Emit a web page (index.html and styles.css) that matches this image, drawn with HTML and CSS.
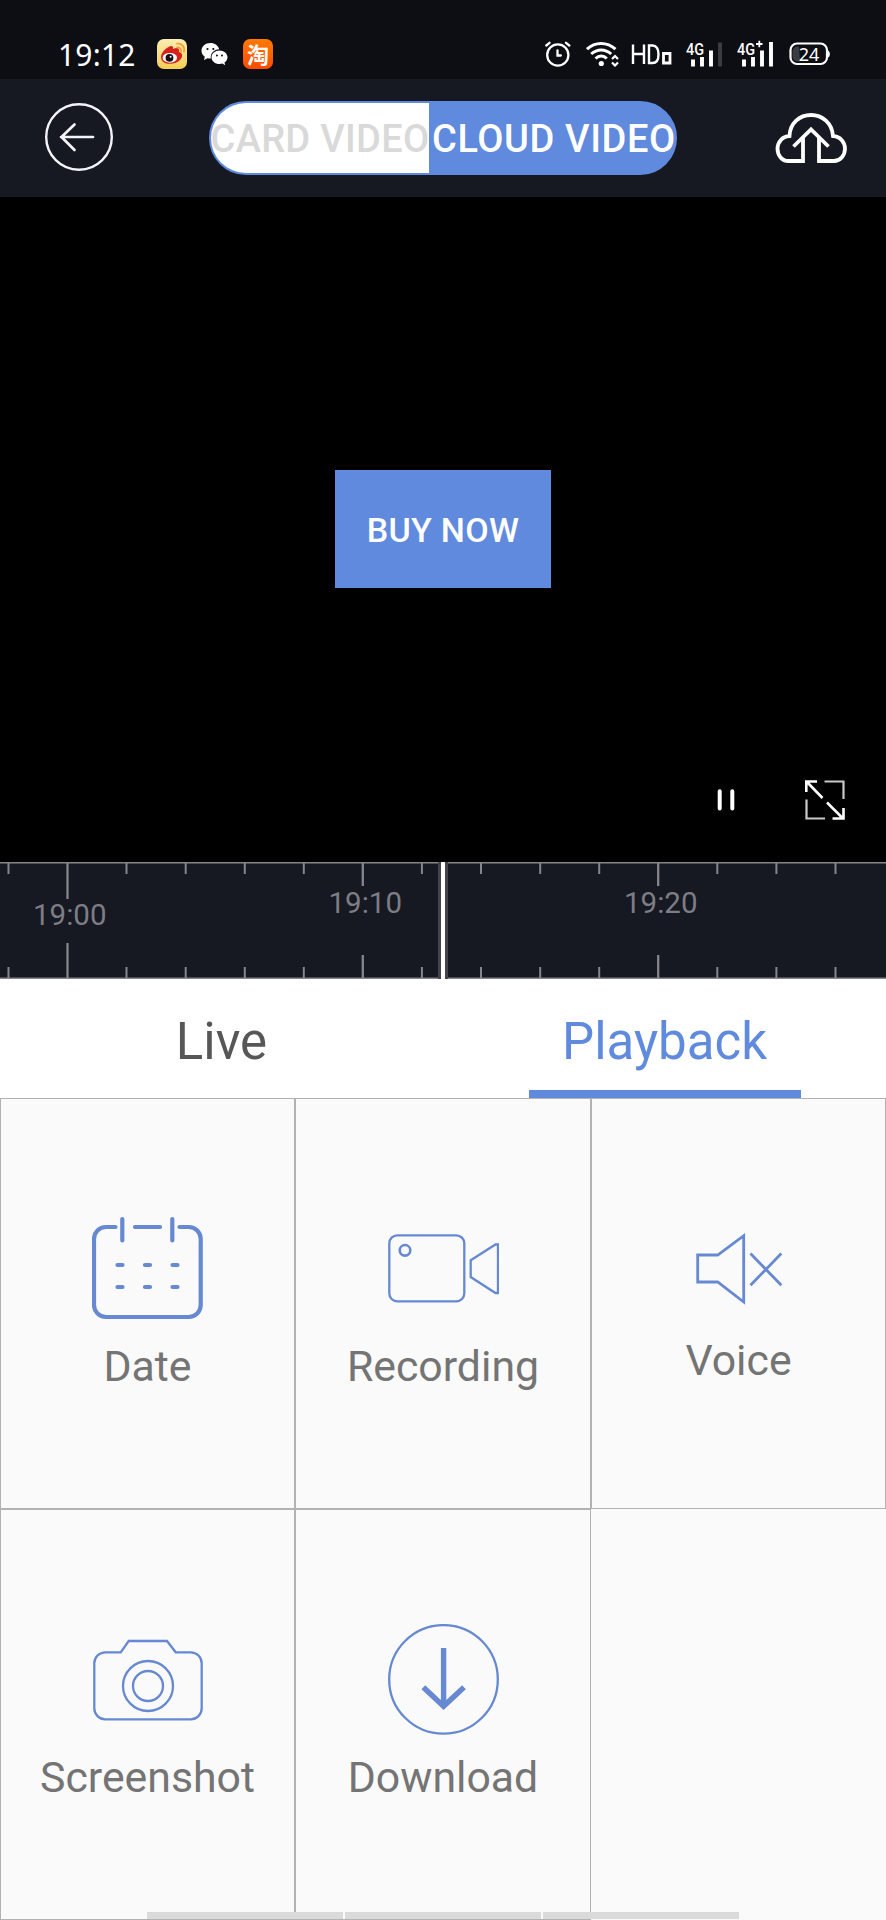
FILE: index.html
```html
<!DOCTYPE html>
<html lang="en">
<head>
<meta charset="utf-8">
<title>Playback</title>
<link rel="stylesheet" href="styles.css">
</head>
<body>
<div class="screen">
  <div class="status">
    <span class="clock">19:12</span>
    <svg class="app weibo" width="30" height="30" viewBox="0 0 30 30">
      <defs><linearGradient id="wb" x1="0" y1="0" x2="0" y2="1"><stop offset="0" stop-color="#fbeeb4"/><stop offset="1" stop-color="#f6cf52"/></linearGradient></defs>
      <rect width="30" height="30" rx="7" fill="url(#wb)"/>
      <path d="M4 18C4 13 10 8 14 7c3 0 2 3 2 3 4-2 7-1 6 3 4 1 4 5 1 8-4 5-19 6-19-3z" fill="#d8201f"/>
      <ellipse cx="12.800" cy="18.800" rx="7.200" ry="4.900" fill="#fff"/>
      <circle cx="12.500" cy="18.800" r="3.900" fill="#111"/><circle cx="13.600" cy="17.800" r="1" fill="#fff"/>
      <path d="M20 8.500c3-.3 4.600 1.800 4 4.500M20 4.700c5-.6 8 3 7 8" fill="none" stroke="#f0a23a" stroke-width="1.800" stroke-linecap="round"/>
    </svg>
    <svg class="app wechat" width="28" height="24" viewBox="0 0 28 24">
      <path d="M9.500 1C4.300 1 .5 4.400.5 8.800c0 2.500 1.300 4.600 3.300 6L3 18l3.500-1.800c1 .3 2.200.4 3.300.4C9 11.500 13 7.400 18.200 7.300 17.300 3.600 13.800 1 9.500 1z" fill="#fff"/>
      <path d="M18.500 8.500c-4.500 0-8 3-8 6.800s3.500 6.800 8 6.800c1 0 2-.2 2.900-.5l2.800 1.600-.7-2.700c1.800-1.200 3-3 3-5.200 0-3.800-3.500-6.800-8-6.800z" fill="#fff"/>
      <g fill="#0d0d14"><circle cx="6.500" cy="7" r="1.100"/><circle cx="12.300" cy="7" r="1.100"/><circle cx="15.900" cy="13.500" r="1"/><circle cx="21" cy="13.500" r="1"/></g>
    </svg>
    <span class="app taobao">淘</span>
    <span class="spacer"></span>
    <svg class="alarm" width="26" height="26" viewBox="0 0 26 26" fill="none" stroke="#fff" stroke-width="2.300" stroke-linecap="round">
      <circle cx="12.800" cy="14" r="10.600"/><path d="M12.500 9.500v5h3.300M1.300 4.500 4.500 1.800M24.300 4.500 21 1.800"/>
    </svg>
    <svg class="wifi" width="33" height="26" viewBox="0 0 33 26" fill="none" stroke="#fff" stroke-width="3">
      <path d="M1 8.200c8-7.600 20-7.600 28.500 0M5.200 13c6-5.500 14-5.500 20 0M9.500 17.500c3.500-3.200 8-3.200 11.300 0"/>
      <circle cx="15.300" cy="22.500" r="2.600" fill="#fff" stroke="none"/>
      <path d="m26 18 3-3 3 3M26 21.500l3 3 3-3" stroke-width="2.200"/>
    </svg>
    <svg class="hd" width="42" height="26" viewBox="0 0 42 26">
      <g fill="none" stroke="#fff" stroke-width="2.400"><path d="M2 3.500v19.500M13 3.500v19.500M2 13h11M18 4.500v17.500h3.500c4 0 6-3.500 6-8.800s-2-8.700-6-8.700z"/><path d="M32.500 12.500h6.500V22h-6.500z" stroke-width="2.800"/></g>
    </svg>
    <svg class="sig" width="37" height="36" viewBox="0 -5 37 36">
      <text class="net" x="0" y="13.500" textLength="18" lengthAdjust="spacingAndGlyphs">4G</text>
      <path d="M7 18.500V25.500M16 16v9.500M25 9.500V25.500" stroke="#fff" stroke-width="3.900"/><path d="M34 1.500V25.500" stroke="#3b3b42" stroke-width="3.900"/>
    </svg>
    <svg class="sig2" width="38" height="36" viewBox="0 -5 38 36">
      <text class="net" x="0" y="13.500" textLength="18" lengthAdjust="spacingAndGlyphs">4G</text>
      <path d="M19 3h6.500M22.300-.2v6.500" stroke="#fff" stroke-width="1.800"/>
      <path d="M7 18.500V25.500M16 16v9.500M25 9.500V25.500M34 1V25.500" stroke="#fff" stroke-width="3.900"/>
    </svg>
    <svg class="batt" width="42" height="24" viewBox="0 0 42 24">
      <path d="M10 4.500h-1.500a5 5 0 0 0-5 5v5a5 5 0 0 0 5 5H11z" fill="#3b3b42"/>
      <rect x="1.500" y="1.500" width="36.500" height="20.500" rx="6.500" fill="none" stroke="#fff" stroke-width="2.200"/>
      <path d="M39 8.500c2.500 1 2.500 6 0 7z" fill="#fff"/>
      <text class="pct" x="20" y="18.500" text-anchor="middle">24</text>
    </svg>
  </div>

  <div class="header">
    <svg class="back" width="70" height="70" viewBox="0 0 70 70" fill="none" stroke="#f3f3f8" stroke-width="2.400">
      <circle cx="35" cy="35" r="32.800"/><path d="M49 35H17M30.500 22.500 17.500 35 30.500 48" stroke-width="2.700" stroke-linecap="round" stroke-linejoin="round"/>
    </svg>
    <div class="toggle"><span class="opt card">CARD VIDEO</span><span class="opt cloud">CLOUD VIDEO</span></div>
    <svg class="upload" width="72" height="52" viewBox="0 0 72 52" fill="none" stroke="#fff" stroke-width="3.800">
      <path d="M28 25V49H13.500C6.500 49 2.500 43 2.500 36.500c0-6 4.500-12 12-12.500C15 11 24.500 3 36 3s21 8 22 21c7.500.5 12 6.500 12 12.500C70 43 65.500 49 59 49H44V25"/>
      <path d="M18.500 34.500 36 17.500l17.500 17"/>
    </svg>
  </div>

  <div class="video">
    <button class="buy">BUY NOW</button>
    <div class="controls">
      <svg width="20" height="24" viewBox="0 0 20 24" stroke="#fff" stroke-width="4" stroke-linecap="round"><path d="M3.700 3.200v17.200M16.300 3.200v17.200"/></svg>
      <svg width="40" height="40" viewBox="0 0 40 40" fill="none" stroke="#fff" stroke-width="2.600">
        <path d="M19.500 1.500H38.500V19M1.500 19.500V38.500H20" stroke="#c9c9c9" stroke-width="2.200"/>
        <path d="M1.300 12V1.500H12M1.500 1.500l16 16.500M22 22.500 38 38.500M27.500 38.500H38.500V28"/>
      </svg>
    </div>
  </div>

  <svg class="ruler" width="886" height="117" viewBox="0 0 886 117">
    <path d="M0 .8H886M0 116.200H886" stroke="#858589" stroke-width="1.600"/>
    <g stroke="#85858b" stroke-width="2">
      <path d="M8.500 1v11M126.500 1v11M185.700 1v11M244.800 1v11M303.800 1v11M421.900 1v11M481 1v11M540.200 1v11M599.200 1v11M717.300 1v11M776.400 1v11M835.500 1v11"/>
      <path d="M8.500 105v11M126.500 105v11M185.700 105v11M244.800 105v11M303.800 105v11M421.900 105v11M481 105v11M540.200 105v11M599.200 105v11M717.300 105v11M776.400 105v11M835.500 105v11"/>
      <path d="M67.500 1v36M67.500 81v35M362.800 1v23M362.800 93v23M658.200 1v23M658.200 93v23" stroke-width="2.300"/>
    </g>
    <g class="times"><text x="33" y="63.300">19:00</text><text x="328.500" y="51">19:10</text><text x="624" y="51">19:20</text></g>
    <path d="M443 0V117" stroke="#44444a" stroke-width="10"/><path d="M443 0V117" stroke="#fff" stroke-width="4"/>
  </svg>

  <div class="tabs">
    <div class="tab">Live</div>
    <div class="tab active">Playback</div>
  </div>

  <div class="grid">
    <div class="cell">
      <svg class="icon" viewBox="0 0 111 111" stroke-width="4.200" stroke-linecap="round">
        <path d="M23.500 14H14A12 12 0 0 0 2 26V92a12 12 0 0 0 12 12H96.700a12 12 0 0 0 12-12V26a12 12 0 0 0-12-12H87.500M43 14H68M30.300 6V27.500M80.300 6V27.500M25.500 52h5M53 52h5M80.500 52h5M25.500 74h5M53 74h5M80.500 74h5"/>
      </svg>
      <span class="label">Date</span>
    </div>
    <div class="cell">
      <svg class="icon" viewBox="0 0 111 111" stroke-width="2.300">
        <rect x="1.300" y="22.300" width="75" height="66" rx="8"/><circle cx="17" cy="37.300" r="5.300" stroke-width="2.600"/>
        <path d="M82.700 47.300 107.500 31.500H110V80H107.500L82.700 64z"/>
      </svg>
      <span class="label">Recording</span>
    </div>
    <div class="cell voice">
      <svg class="icon" viewBox="0 0 111 111" stroke-width="2.800">
        <path d="M14.700 42h20L60.700 22.700V89L34.700 69h-20zM67.500 40.500 98.300 72.300M98.300 40.500 67.500 72.300"/>
      </svg>
      <span class="label">Voice</span>
    </div>
    <div class="cell">
      <svg class="icon" viewBox="0 0 111 111" stroke-width="2.300">
        <path d="M28.700 28.300 36.700 17H75l8.700 11.300H98.700a11 11 0 0 1 11 11v45a11 11 0 0 1-11 11H13.300a11 11 0 0 1-11-11v-45a11 11 0 0 1 11-11z"/>
        <circle cx="56" cy="62" r="25"/><circle cx="56" cy="62" r="15"/>
      </svg>
      <span class="label">Screenshot</span>
    </div>
    <div class="cell">
      <svg class="icon" viewBox="0 0 111 111" stroke-width="5.400">
        <circle cx="55.500" cy="55.400" r="54.300" stroke-width="2.300"/><path d="M55.600 24V82M35.300 63.300 55.600 82.300 76 63.300"/>
      </svg>
      <span class="label">Download</span>
    </div>
  </div>
  <div class="home"><span></span><span></span><span></span></div>
</div>
</body>
</html>
```

FILE: styles.css
```css
* { box-sizing: border-box; }
body { margin: 0; font-family: Roboto, "Liberation Sans", sans-serif; }
.screen { position: relative; width: 886px; height: 1920px; overflow: hidden; background: #fafafa; }
svg { display: block; flex: none; }

.status { display: flex; align-items: center; height: 79px; padding: 29px 55px 0 58px; background: #0d0d14; color: #fff; }
.clock { width: 99px; padding-top: 1px; font: 30px/34px "Noto Sans", sans-serif; letter-spacing: .2px; }
.wechat { margin: 0 14px; }
.taobao { width: 30px; height: 30px; border-radius: 7px; background: linear-gradient(#ff7a00, #ff4a00); font: bold 22px/29px "Noto Sans CJK SC", sans-serif; text-align: center; }
.spacer { flex: 1; }
.wifi { margin-left: 15px; }
.hd { margin-left: 12px; }
.sig { margin-left: 13px; }
.sig2 { margin-left: 14px; }
.batt { margin-left: 14px; }
.net { font: 500 17px Roboto, sans-serif; fill: #fff; }
.pct { font: 18px "Noto Sans", sans-serif; fill: #fff; }

.header { display: flex; align-items: center; height: 118px; padding: 0 39px 0 44px; background: #161822; }
.back { margin-bottom: 3px; }
.toggle { display: flex; width: 469px; height: 74px; margin: 0 98px 0 95px; border: 2px solid #608add; border-radius: 37px; overflow: hidden; background: #608add; font-size: 38px; font-weight: 500; line-height: 72px; white-space: nowrap; }
.opt { display: flex; justify-content: center; }
.card { width: 218px; background: #fff; color: #d9d9d9; letter-spacing: .3px; }
.cloud { width: 247px; padding-left: 3px; color: #fff; letter-spacing: .6px; }

.video { display: flex; flex-direction: column; align-items: center; height: 665px; padding-top: 273px; background: #000; }
.buy { width: 216px; height: 118px; padding: 2px 0 0; border: 0; background: #608add; color: #fff; font: 500 34px Roboto, sans-serif; letter-spacing: .3px; }
.controls { display: flex; align-items: center; align-self: flex-end; gap: 69px; margin: 192px 41px 0 0; }

.ruler { background: #161822; }
.times { font-size: 29.500px; fill: #7d7d85; }

.tabs { display: flex; justify-content: space-around; height: 119px; background: #fff; }
.tab { width: 272px; padding-top: 1px; text-align: center; font-size: 51px; line-height: 124px; color: #575757; }
.tab.active { color: #608add; border-bottom: 8px solid #608add; }

.grid { display: grid; grid-template-columns: 295px 296px 295px; grid-template-rows: 411px 411px; }
.cell { display: flex; flex-direction: column; align-items: center; border: 1px solid #b2b2b2; padding-top: 114px; }
.icon { width: 111px; height: 111px; fill: none; stroke: #6689d2; }
.label { margin-top: 17px; font-size: 42.800px; line-height: 50px; color: #747474; }
.voice .label { margin-top: 11px; }

.home { position: absolute; left: 147px; bottom: 1px; display: flex; gap: 2px; }
.home span { width: 196px; height: 7px; background: #dadada; }
```
